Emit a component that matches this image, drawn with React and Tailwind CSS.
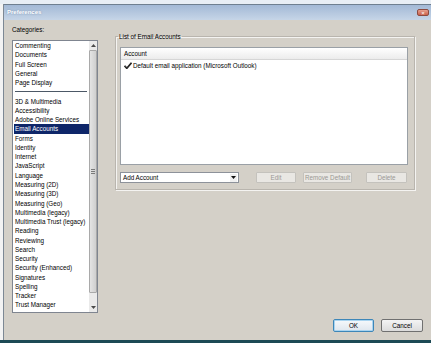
const categories = [
    'Commenting',
    'Documents',
    'Full Screen',
    'General',
    'Page Display',
    '---',
    '3D & Multimedia',
    'Accessibility',
    'Adobe Online Services',
    'Email Accounts',
    'Forms',
    'Identity',
    'Internet',
    'JavaScript',
    'Language',
    'Measuring (2D)',
    'Measuring (3D)',
    'Measuring (Geo)',
    'Multimedia (legacy)',
    'Multimedia Trust (legacy)',
    'Reading',
    'Reviewing',
    'Search',
    'Security',
    'Security (Enhanced)',
    'Signatures',
    'Spelling',
    'Tracker',
    'Trust Manager',
    'Units & Guides',
];

function Arrow({ up }) {
    return (
        <svg width="5" height="3" viewBox="0 0 5 3" className={up ? '' : 'rotate-180'}>
            <path d="M0 3 L2.5 0 L5 3 Z" fill="#4a4a4a" />
        </svg>
    );
}

function CategoryList() {
    return (
        <div className="flex h-[273px] w-[86px] overflow-hidden border border-[#7f8590] bg-white">
            <div className="flex-1 overflow-hidden pl-[1px]">
                {categories.map((item) =>
                    item === '---' ? (
                        <div key={item} className="flex h-[9.27px] items-center px-[1px]">
                            <div className="h-px w-[72px] bg-[#4c5866]" />
                        </div>
                    ) : (
                        <div
                            key={item}
                            className={
                                item === 'Email Accounts'
                                    ? 'h-[9.27px] whitespace-nowrap bg-[#0e2669] pl-[1px] leading-[9.27px] text-white'
                                    : 'h-[9.27px] whitespace-nowrap pl-[1px] leading-[9.27px] text-black'
                            }
                        >
                            {item}
                        </div>
                    )
                )}
            </div>
            <div className="flex w-[8px] flex-col items-stretch bg-[#eaeaea]">
                <div className="flex h-[8px] items-center justify-center">
                    <Arrow up />
                </div>
                <div className="mt-[1px] flex h-[243px] items-center justify-center rounded-[1px] border border-[#a9a9a9] bg-gradient-to-r from-[#e4e4e4] to-[#cfcfcf]">
                    <div className="flex flex-col gap-[1px]">
                        <div className="h-px w-[4px] bg-[#7a7a7a]" />
                        <div className="h-px w-[4px] bg-[#7a7a7a]" />
                        <div className="h-px w-[4px] bg-[#7a7a7a]" />
                    </div>
                </div>
                <div className="mt-auto flex h-[9px] items-center justify-center">
                    <Arrow />
                </div>
            </div>
        </div>
    );
}

function DisabledButton({ label, width }) {
    return (
        <div
            className={`${width} flex h-[11px] items-center justify-center rounded-[1px] border border-[#c4c2bd] bg-[#e9e7e3] text-[#9a9893]`}
        >
            {label}
        </div>
    );
}

function AccountsGroup() {
    return (
        <fieldset className="ml-[17px] mt-[7px] w-[300px] border border-[#b9b5ae] pb-[6px] pl-[4px] pr-[6px] pt-[6px] shadow-[1px_1px_0_#f4f3f1,inset_1px_1px_0_#f4f3f1]">
            <legend className="-ml-[2px] px-[1px] leading-[9px] text-black">List of Email Accounts</legend>
            <div className="h-[118px] w-[288px] border border-[#9aa0a6] bg-white">
                <div className="flex h-[12px] items-center border-b border-[#d6d6d6] bg-gradient-to-b from-white to-[#ececec] pl-[3px] text-black">
                    Account
                </div>
                <div className="flex h-[11px] items-center gap-[1px] pl-[3px] text-black">
                    <svg width="8" height="7" viewBox="0 0 8 7">
                        <path d="M0.6 3.8 L2.8 6.3 L7.5 0.7" fill="none" stroke="#222" strokeWidth="1.7" />
                        <path d="M1.2 3.6 L2.8 5.4" fill="none" stroke="#8a8a8a" strokeWidth="0.6" />
                    </svg>
                    <span className="whitespace-nowrap">Default email application (Microsoft Outlook)</span>
                </div>
            </div>
            <div className="mt-[7px] flex h-[11px] items-center">
                <div className="flex h-[11px] w-[119px] items-center border border-[#8d929a] bg-white pl-[2px] text-black">
                    <span className="flex-1">Add Account</span>
                    <div className="mr-[1px] flex h-[8px] w-[7px] items-center justify-center bg-[#f0f0f0]">
                        <svg width="5" height="3" viewBox="0 0 5 3">
                            <path d="M0 0 L5 0 L2.5 3 Z" fill="#111" />
                        </svg>
                    </div>
                </div>
                <div className="ml-[17px]">
                    <DisabledButton label="Edit" width="w-[40px]" />
                </div>
                <div className="ml-[7px]">
                    <DisabledButton label="Remove Default" width="w-[49px]" />
                </div>
                <div className="ml-[14px]">
                    <DisabledButton label="Delete" width="w-[41px]" />
                </div>
            </div>
        </fieldset>
    );
}

export default function App() {
    return (
        <div className="flex h-[343px] w-[431px] flex-col overflow-hidden bg-[#d4d0c8] font-['Liberation_Sans',Arial,sans-serif] text-[6.3px]">
            <div className="h-[4px] bg-[#e8eef5]" />
            <div className="flex flex-1">
                <div className="w-[3px] bg-[#f3f3f3]" />
                <div className="flex flex-1 flex-col border-l border-[#7d8894]">
                    <div className="flex h-[16px] items-center border-t border-[#6f7f90] bg-gradient-to-b from-[#a3b9d6] to-[#c6d5e7] pl-[3px]">
                        <span className="text-[6px] font-bold text-white [text-shadow:0_0_2px_#6b84a6]">Preferences</span>
                        <div className="ml-auto mr-[2px] flex h-[7px] w-[12px] items-center justify-center rounded-[2px] border border-[#8c4a40] bg-gradient-to-b from-[#e6a08f] to-[#c9604c] text-[6px] leading-none text-white">
                            ×
                        </div>
                    </div>
                    <div className="flex flex-1 flex-col bg-[#d4d0c8] pl-[8px] pt-[5px]">
                        <div className="flex items-start">
                            <div className="flex w-[86px] flex-col">
                                <div className="h-[9px] leading-[9px] text-black">Categories:</div>
                                <div className="mt-[6px]">
                                    <CategoryList />
                                </div>
                            </div>
                            <AccountsGroup />
                        </div>
                        <div className="mt-auto flex justify-end gap-[7px] pb-[8px] pr-[8px]">
                            <div className="flex h-[13px] w-[41px] items-center justify-center rounded-[2px] border border-[#3d86b8] bg-gradient-to-b from-[#f6f9fc] to-[#dfe6ee] text-black shadow-[inset_0_0_0_1px_#a9d4f0]">
                                OK
                            </div>
                            <div className="flex h-[13px] w-[42px] items-center justify-center rounded-[2px] border border-[#707070] bg-gradient-to-b from-[#f4f4f4] to-[#dcdcdc] text-black">
                                Cancel
                            </div>
                        </div>
                    </div>
                </div>
            </div>
            <div className="h-[3px] bg-[#1d4a55]" />
        </div>
    );
}
